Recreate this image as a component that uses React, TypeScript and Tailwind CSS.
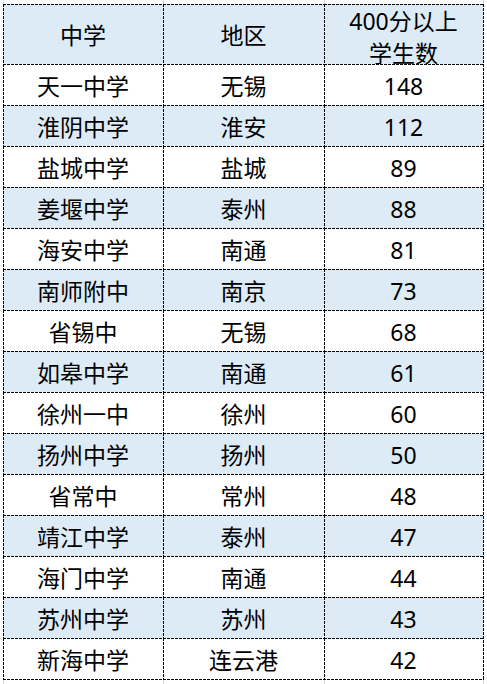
import React from "react";

const rows: [string, string, string][] = [
  ["天一中学", "无锡", "148"],
  ["淮阴中学", "淮安", "112"],
  ["盐城中学", "盐城", "89"],
  ["姜堰中学", "泰州", "88"],
  ["海安中学", "南通", "81"],
  ["南师附中", "南京", "73"],
  ["省锡中", "无锡", "68"],
  ["如皋中学", "南通", "61"],
  ["徐州一中", "徐州", "60"],
  ["扬州中学", "扬州", "50"],
  ["省常中", "常州", "48"],
  ["靖江中学", "泰州", "47"],
  ["海门中学", "南通", "44"],
  ["苏州中学", "苏州", "43"],
  ["新海中学", "连云港", "42"],
];

const cellLines =
  "bg-no-repeat [background-image:repeating-linear-gradient(90deg,#000_0_3px,transparent_3px_4px),repeating-linear-gradient(180deg,#000_0_3px,transparent_3px_4px)] [background-size:100%_1px,1px_100%]";

function Cell({ w, blue, children, className = "" }: { w: string; blue: boolean; children: React.ReactNode; className?: string }) {
  return (
    <div
      className={`${w} ${cellLines} ${blue ? "bg-[#ddebf7]" : "bg-white"} flex items-center justify-center pt-[3px] ${className}`}
    >
      {children}
    </div>
  );
}

function GridStrip({ h }: { h: string }) {
  return (
    <div className={`flex ${h}`}>
      <div className="w-[3px]" />
      <div className="w-[160px] border-l border-[#d4d4d4]" />
      <div className="w-[161px] border-l border-[#d4d4d4]" />
      <div className="w-[159px] border-l border-[#d4d4d4]" />
      <div className="w-[4px] border-l border-[#d4d4d4]" />
    </div>
  );
}

export default function App() {
  return (
    <div
      className="w-[487px] h-[684px] bg-white text-black text-[23px] overflow-hidden"
      style={{ fontFamily: '"Noto Sans", "Noto Sans CJK SC", sans-serif' }}
    >
      <GridStrip h="h-[4px]" />
      <div className="ml-[3px] w-[481px] pr-[1px] pb-[1px] bg-no-repeat [background-image:repeating-linear-gradient(90deg,#000_0_3px,transparent_3px_4px),repeating-linear-gradient(180deg,#000_0_3px,transparent_3px_4px)] [background-size:100%_1px,1px_100%] [background-position:0_100%,100%_0]">
        <div className="flex h-[60px]">
          <Cell w="w-[160px]" blue>
            中学
          </Cell>
          <Cell w="w-[161px]" blue>
            地区
          </Cell>
          <Cell w="w-[159px]" blue className="flex-col !justify-start !pt-[1px] leading-[32px]">
            <span>400分以上</span>
            <span>学生数</span>
          </Cell>
        </div>
        {rows.map(([school, area, n], i) => (
          <div key={school} className="flex h-[41px]">
            <Cell w="w-[160px]" blue={i % 2 === 1}>
              {school}
            </Cell>
            <Cell w="w-[161px]" blue={i % 2 === 1}>
              {area}
            </Cell>
            <Cell w="w-[159px]" blue={i % 2 === 1}>
              {n}
            </Cell>
          </div>
        ))}
      </div>
      <GridStrip h="h-[5px]" />
    </div>
  );
}
